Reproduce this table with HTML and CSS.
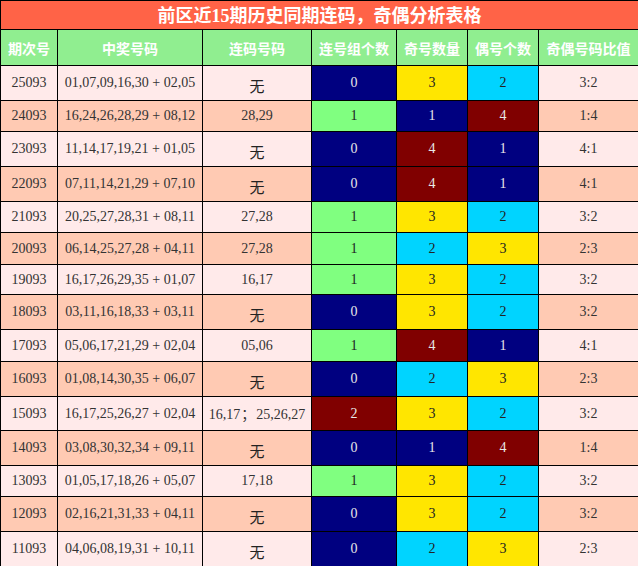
FILE: index.html
```html
<!DOCTYPE html>
<html lang="zh">
<head>
<meta charset="utf-8">
<title>前区近15期历史同期连码，奇偶分析表格</title>
<link rel="stylesheet" href="styles.css">
</head>
<body>
<table class="grid">
  <colgroup>
    <col class="c-issue"><col class="c-nums"><col class="c-link"><col class="c-grp"><col class="c-odd"><col class="c-even"><col class="c-ratio">
  </colgroup>
  <thead>
    <tr class="r-title"><th colspan="7" class="title">前区近<span class="num">15</span>期历史同期连码，奇偶分析表格</th></tr>
    <tr class="r-head">
      <th>期次号</th><th>中奖号码</th><th>连码号码</th><th>连号组个数</th><th>奇号数量</th><th>偶号个数</th><th>奇偶号码比值</th>
    </tr>
  </thead>
  <tbody>
    <tr class="tall pink"><td>25093</td><td>01,07,09,16,30 + 02,05</td><td class="cn">无</td><td class="navy">0</td><td class="yellow">3</td><td class="cyan">2</td><td>3:2</td></tr>
    <tr class="short peach"><td>24093</td><td>16,24,26,28,29 + 08,12</td><td>28,29</td><td class="green">1</td><td class="navy">1</td><td class="maroon">4</td><td>1:4</td></tr>
    <tr class="tall pink"><td>23093</td><td>11,14,17,19,21 + 01,05</td><td class="cn">无</td><td class="navy">0</td><td class="maroon">4</td><td class="navy">1</td><td>4:1</td></tr>
    <tr class="tall peach"><td>22093</td><td>07,11,14,21,29 + 07,10</td><td class="cn">无</td><td class="navy">0</td><td class="maroon">4</td><td class="navy">1</td><td>4:1</td></tr>
    <tr class="short pink"><td>21093</td><td>20,25,27,28,31 + 08,11</td><td>27,28</td><td class="green">1</td><td class="yellow">3</td><td class="cyan">2</td><td>3:2</td></tr>
    <tr class="short2 peach"><td>20093</td><td>06,14,25,27,28 + 04,11</td><td>27,28</td><td class="green">1</td><td class="cyan">2</td><td class="yellow">3</td><td>2:3</td></tr>
    <tr class="short0 pink"><td>19093</td><td>16,17,26,29,35 + 01,07</td><td>16,17</td><td class="green">1</td><td class="yellow">3</td><td class="cyan">2</td><td>3:2</td></tr>
    <tr class="tall peach"><td>18093</td><td>03,11,16,18,33 + 03,11</td><td class="cn">无</td><td class="navy">0</td><td class="yellow">3</td><td class="cyan">2</td><td>3:2</td></tr>
    <tr class="short2 pink"><td>17093</td><td>05,06,17,21,29 + 02,04</td><td>05,06</td><td class="green">1</td><td class="maroon">4</td><td class="navy">1</td><td>4:1</td></tr>
    <tr class="tall peach"><td>16093</td><td>01,08,14,30,35 + 06,07</td><td class="cn">无</td><td class="navy">0</td><td class="cyan">2</td><td class="yellow">3</td><td>2:3</td></tr>
    <tr class="mid pink"><td>15093</td><td>16,17,25,26,27 + 02,04</td><td class="multi">16,17<span class="semi">；</span>25,26,27</td><td class="maroon">2</td><td class="yellow">3</td><td class="cyan">2</td><td>3:2</td></tr>
    <tr class="tall peach"><td>14093</td><td>03,08,30,32,34 + 09,11</td><td class="cn">无</td><td class="navy">0</td><td class="navy">1</td><td class="maroon">4</td><td>1:4</td></tr>
    <tr class="short pink"><td>13093</td><td>01,05,17,18,26 + 05,07</td><td>17,18</td><td class="green">1</td><td class="yellow">3</td><td class="cyan">2</td><td>3:2</td></tr>
    <tr class="tall peach"><td>12093</td><td>02,16,21,31,33 + 04,11</td><td class="cn">无</td><td class="navy">0</td><td class="yellow">3</td><td class="cyan">2</td><td>3:2</td></tr>
    <tr class="tall pink"><td>11093</td><td>04,06,08,19,31 + 10,11</td><td class="cn">无</td><td class="navy">0</td><td class="cyan">2</td><td class="yellow">3</td><td>2:3</td></tr>
  </tbody>
</table>
</body>
</html>
```

FILE: styles.css
```css
html, body {
  margin: 0;
  padding: 0;
  background: #ffffff;
}

.grid {
  width: 638px;
  border-collapse: collapse;
  table-layout: fixed;
  font-family: "Liberation Serif", "Noto Sans CJK SC", serif;
  font-size: 14px;
  line-height: 16px;
  color: #333333;
}

.c-issue { width: 57px; }
.c-nums { width: 145px; }
.c-link { width: 109px; }
.c-grp { width: 85px; }
.c-odd { width: 71px; }
.c-even { width: 71px; }
.c-ratio { width: 100px; }

.grid th,
.grid td {
  border: 1px solid #000000;
  padding: 0;
  text-align: center;
  vertical-align: middle;
  white-space: nowrap;
}

.title {
  background: #ff6347;
  color: #ffffff;
  font-family: "Noto Sans CJK SC", sans-serif;
  font-weight: bold;
  font-size: 18px;
  line-height: 20px;
}

.title .num {
  font-family: "Liberation Serif", serif;
  font-weight: bold;
}

.r-title { height: 29px; }

.r-head { height: 36px; }

.r-head th {
  background: #90ee90;
  color: #ffffff;
  font-family: "Noto Sans CJK SC", sans-serif;
  font-weight: bold;
  font-size: 14px;
  line-height: 18px;
}

.tall { height: 35px; }
.short { height: 31px; }
.short2 { height: 32px; }
.short0 { height: 30px; }
.mid { height: 34px; }

.pink td { background: #ffeaea; }
.peach td { background: #ffcab3; }

.grid td.cn {
  font-family: "Noto Sans CJK SC", sans-serif;
  font-size: 15px;
  line-height: 16px;
  color: #222222;
  padding-top: 5px;
}

.semi {
  font-family: "Noto Sans CJK SC", sans-serif;
  line-height: 16px;
  padding: 0 1px;
}

.grid td.navy { background: #000080; color: #e8e8e8; }
.grid td.maroon { background: #800000; color: #e8e8e8; }
.grid td.green { background: #80ff80; color: #222222; }
.grid td.yellow { background: #ffe600; color: #222222; }
.grid td.cyan { background: #00d4ff; color: #222222; }
```
